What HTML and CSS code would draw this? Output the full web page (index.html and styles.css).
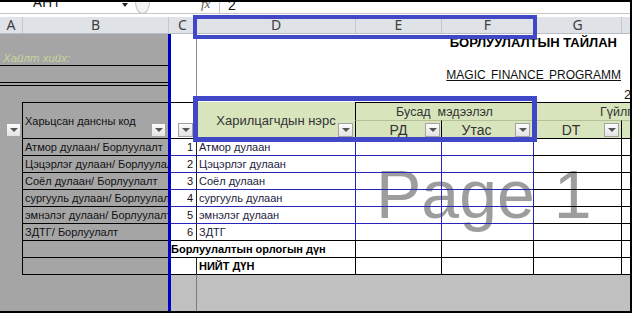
FILE: index.html
```html
<!DOCTYPE html>
<html lang="mn">

<head>
    <meta charset="UTF-8">
    <meta name="viewport" content="width=device-width, initial-scale=1.0">
    <title>Борлуулалтын тайлан</title>
    <link rel="stylesheet" href="styles.css">
</head>

<body>
    <div class="window">
        <div class="formula-bar">
            <div class="name-box"><span class="value">AH1</span><span class="arrow"></span></div>
            <div class="splitter"><span class="knob"></span></div>
            <div class="fx">fx</div>
            <div class="formula"><span>2</span></div>
        </div>

        <div class="col-heads">
            <div>A</div>
            <div>B</div>
            <div>C</div>
            <div>D</div>
            <div>E</div>
            <div>F</div>
            <div>G</div>
            <div></div>
        </div>

        <div class="watermark">Page 1</div>

        <div class="sheet">
            <div class="row r-title">
                <div class="out span-ab"></div>
                <div></div>
                <div class="grid-d"></div>
                <div class="span-eg title">БОРЛУУЛАЛТЫН ТАЙЛАН</div>
                <div></div>
            </div>
            <div class="row r-search">
                <div class="out span-ab rule search">Хайлт хийх:</div>
                <div></div>
                <div class="grid-d"></div>
                <div class="span-eg"></div>
                <div></div>
            </div>
            <div class="row r-prog">
                <div class="out span-ab rule"></div>
                <div></div>
                <div class="grid-d"></div>
                <div class="span-eg program">MAGIC FINANCE PROGRAMM</div>
                <div></div>
            </div>
            <div class="row r-thin">
                <div class="out span-ab rule"></div>
                <div></div>
                <div class="grid-d"></div>
                <div class="span-eg"></div>
                <div></div>
            </div>
            <div class="row r-date">
                <div class="out span-ab"></div>
                <div></div>
                <div class="grid-d"></div>
                <div class="span-eg"></div>
                <div class="date">2014</div>
            </div>

            <div class="row head">
                <div class="out h-a"><span class="filter"></span></div>
                <div class="out h-b">Харьцсан дансны код<span class="filter"></span></div>
                <div class="h-c"><span class="filter"></span></div>
                <div class="h-d">Харилцагчдын нэрс<span class="filter"></span></div>
                <div class="h-group h-ef">Бусад&nbsp; мэдээлэл</div>
                <div class="h-group h-gh">Гүйлгээний мэдээлэл</div>
                <div class="h-sub h-e">РД<span class="filter"></span></div>
                <div class="h-sub h-f">Утас<span class="filter"></span></div>
                <div class="h-sub h-g">DT<span class="filter"></span></div>
                <div class="h-sub h-h"></div>
            </div>

            <div class="row data first">
                <div class="out"></div>
                <div class="out acct">Атмор дулаан/ Борлуулалт</div>
                <div class="num">1</div>
                <div class="name">Атмор дулаан</div>
                <div class="blank"></div>
                <div class="blank"></div>
                <div class="blank dt"></div>
                <div class="blank tail"></div>
            </div>
            <div class="row data">
                <div class="out"></div>
                <div class="out acct">Цэцэрлэг дулаан/ Борлуулалт</div>
                <div class="num">2</div>
                <div class="name">Цэцэрлэг дулаан</div>
                <div class="blank"></div>
                <div class="blank"></div>
                <div class="blank dt"></div>
                <div class="blank tail"></div>
            </div>
            <div class="row data">
                <div class="out"></div>
                <div class="out acct">Соёл дулаан/ Борлуулалт</div>
                <div class="num">3</div>
                <div class="name">Соёл дулаан</div>
                <div class="blank"></div>
                <div class="blank"></div>
                <div class="blank dt"></div>
                <div class="blank tail"></div>
            </div>
            <div class="row data">
                <div class="out"></div>
                <div class="out acct">сургууль дулаан/ Борлуулалт</div>
                <div class="num">4</div>
                <div class="name">сургууль дулаан</div>
                <div class="blank"></div>
                <div class="blank"></div>
                <div class="blank dt"></div>
                <div class="blank tail"></div>
            </div>
            <div class="row data">
                <div class="out"></div>
                <div class="out acct">эмнэлэг дулаан/ Борлуулалт</div>
                <div class="num">5</div>
                <div class="name">эмнэлэг дулаан</div>
                <div class="blank"></div>
                <div class="blank"></div>
                <div class="blank dt"></div>
                <div class="blank tail"></div>
            </div>
            <div class="row data">
                <div class="out"></div>
                <div class="out acct">ЗДТГ/ Борлуулалт</div>
                <div class="num">6</div>
                <div class="name">ЗДТГ</div>
                <div class="blank"></div>
                <div class="blank"></div>
                <div class="blank dt"></div>
                <div class="blank tail"></div>
            </div>

            <div class="row total">
                <div class="out"></div>
                <div class="out acct"></div>
                <div class="sum">Борлуулалтын орлогын дүн</div>
                <div class="cell"></div>
                <div class="cell"></div>
                <div class="cell"></div>
                <div class="cell"></div>
            </div>
            <div class="row total">
                <div class="out"></div>
                <div class="out acct"></div>
                <div class="cell-c"></div>
                <div class="name">НИЙТ ДҮН</div>
                <div class="cell"></div>
                <div class="cell"></div>
                <div class="cell"></div>
                <div class="cell"></div>
            </div>

            <div class="row rest">
                <div class="out"></div>
                <div class="out acct-end"></div>
                <div class="void"></div>
                <div class="void void-d"></div>
                <div class="void void-tail"></div>
            </div>
        </div>

        <div class="page-break"></div>
        <div class="select-box head-box"></div>
        <div class="select-box field-box"></div>
    </div>
</body>

</html>
```

FILE: styles.css
```css
* {
    margin: 0;
    padding: 0;
    box-sizing: border-box;
}

body {
    font-family: "Liberation Sans", Arial, sans-serif;
    background: #fff;
    color: #111;
}

.window {
    --cols: 22px 146px 28px 159px 86px 92px 88px 1fr;
    position: relative;
    display: flex;
    flex-direction: column;
    width: 632px;
    height: 313px;
    border-top: 2px solid #000;
    border-right: 2px solid #000;
    border-bottom: 2px solid #000;
    overflow: hidden;
}

/* formula bar */
.formula-bar {
    display: flex;
    height: 12px;
    border-bottom: 1px solid #c6c6c6;
    overflow: hidden;
}

.name-box {
    display: flex;
    width: 135px;
    padding-left: 33px;
    font-family: "Noto Sans", sans-serif;
    font-size: 14px;
    line-height: 14px;
}

.name-box .value {
    margin-top: -7px;
}

.name-box .arrow {
    margin: 1px 7px 0 auto;
    width: 0;
    height: 0;
    border-left: 3px solid transparent;
    border-right: 3px solid transparent;
    border-top: 4px solid #222;
}

.splitter {
    width: 66px;
}

.knob {
    display: block;
    width: 15px;
    height: 24px;
    margin-top: -12px;
    border: 1px solid #c4c4c4;
    border-radius: 50%;
    background: #f3f3f3;
}

.fx {
    width: 18px;
    margin-top: -5px;
    font-family: "Liberation Serif", serif;
    font-style: italic;
    font-size: 13px;
    line-height: 13px;
    color: #555;
}

.formula {
    flex: 1;
    border-left: 1px solid #c6c6c6;
    padding-left: 8px;
    font-size: 14px;
    line-height: 14px;
}

.formula span {
    display: block;
    margin-top: -4px;
}

/* column letters */
.col-heads {
    display: grid;
    grid-template-columns: var(--cols);
    height: 17px;
    margin-top: 3px;
    background: #dfe3e8;
    border-bottom: 1px solid #b9bec5;
    font-family: "Noto Sans", sans-serif;
    font-size: 14px;
    color: #404040;
}

.col-heads div {
    display: flex;
    align-items: center;
    justify-content: center;
    border-left: 1px solid #c4c8ce;
    line-height: 1;
}

.col-heads div:first-child {
    border-left: 0;
}

/* sheet */
.sheet {
    flex: 1;
    display: flex;
    flex-direction: column;
    font-size: 11px;
}

.row {
    display: grid;
    grid-template-columns: var(--cols);
}

.row > div {
    position: relative;
    display: flex;
    align-items: center;
    min-width: 0;
    overflow: hidden;
    white-space: nowrap;
}

.out {
    background: #a5a5a5;
}

.span-ab {
    grid-column: span 2;
}

.span-eg {
    grid-column: span 3;
    justify-content: flex-end;
}

.rule {
    border-bottom: 1px solid #000;
}

.grid-d {
    border-left: 1px solid #8a8a8a;
}

.r-title { height: 17px; }
.r-search { height: 15px; }
.r-prog { height: 17px; }
.r-thin { height: 3px; }
.r-date { height: 16px; }

.title {
    padding-right: 4px;
    font-size: 13px;
    font-weight: bold;
    color: #000;
}

.search {
    padding-left: 3px;
    font-size: 11.5px;
    font-style: italic;
    color: #c4d79b;
}

.program {
    font-size: 12px;
    word-spacing: 2px;
    text-decoration: underline;
    color: #111;
}

.date {
    padding-left: 3px;
    font-size: 13px;
}

/* table header */
.head {
    height: 36px;
    grid-template-rows: 18px 18px;
}

.head .h-a {
    grid-column: 1;
    grid-row: 1 / 3;
}

.head .h-b {
    grid-column: 2;
    grid-row: 1 / 3;
    border-top: 1px solid #000;
    border-left: 1px solid #000;
    padding-left: 2px;
}

.head .h-c {
    grid-column: 3;
    grid-row: 1 / 3;
    border-top: 1px solid #000;
}

.head .h-d {
    grid-column: 4;
    grid-row: 1 / 3;
    justify-content: center;
    background: #d8e4bc;
    border-left: 1px solid #222;
    font-size: 13px;
    color: #333;
}

.head .h-group {
    justify-content: center;
    background: #d8e4bc;
    border-top: 1px solid #000;
    border-left: 1px solid #000;
    font-size: 12.5px;
    color: #333;
}

.head .h-ef {
    grid-column: 5 / 7;
    grid-row: 1;
}

.head .h-gh {
    grid-column: 7 / 9;
    grid-row: 1;
    justify-content: flex-start;
    padding-left: 66px;
}

.head .h-sub {
    justify-content: center;
    background: #d8e4bc;
    border-top: 1px solid #b4c095;
    border-left: 1px solid #000;
    font-size: 14px;
    color: #333;
}

.head .h-e { grid-column: 5; grid-row: 2; }
.head .h-f { grid-column: 6; grid-row: 2; padding-right: 22px; }
.head .h-g { grid-column: 7; grid-row: 2; padding-right: 13px; }
.head .h-h { grid-column: 8; grid-row: 2; }

.filter {
    position: absolute;
    right: 2px;
    bottom: 1px;
    width: 15px;
    height: 14px;
    border: 1px solid #a3a3a3;
    background: linear-gradient(#fcfcfc, #e3e3e3);
}

.filter::after {
    content: "";
    position: absolute;
    left: 3px;
    top: 4px;
    border-left: 4px solid transparent;
    border-right: 4px solid transparent;
    border-top: 4px solid #555;
}

.h-a .filter,
.h-e .filter {
    right: 1px;
}

.h-c .filter,
.h-f .filter {
    right: 3px;
}

/* body rows */
.data,
.total {
    height: 17px;
}

.acct {
    padding-left: 2px;
    border-top: 1px solid #000;
    border-left: 1px solid #000;
    color: #111;
}

.num {
    justify-content: flex-end;
    padding-right: 3px;
    color: #111;
}

.name {
    padding-left: 2px;
    border-left: 1px solid #222;
    color: #1c2340;
}

.data .num,
.data .name,
.data .blank {
    border-top: 1px solid #2626b8;
}

.data .blank {
    border-left: 1px solid #2626b8;
}

.data .dt,
.data .tail,
.data.first .num,
.data.first .name,
.data.first .blank {
    border-top-color: #000;
}

.data .tail {
    border-left-color: #000;
}

.total .sum {
    grid-column: span 2;
    padding-left: 3px;
    border-top: 1px solid #000;
    font-weight: bold;
    color: #000;
}

.total .cell {
    border-top: 1px solid #000;
    border-left: 1px solid #000;
}

.total .cell-c {
    border-top: 1px solid #000;
}

.total .name {
    border-top: 1px solid #000;
    font-weight: bold;
    color: #000;
}

.rest {
    flex: 1;
}

.rest .acct-end {
    border-top: 1px solid #000;
}

.rest .void {
    background: #c0c0c0;
    border-top: 1px solid #000;
}

.rest .void-d {
    border-left: 1px solid #7a7a7a;
}

.rest .void-tail {
    grid-column: span 4;
}

/* overlays */
.watermark {
    position: absolute;
    left: 376px;
    top: 158px;
    font-size: 68px;
    line-height: 68px;
    color: #9d9d9d;
    white-space: nowrap;
}

.page-break {
    position: absolute;
    left: 168px;
    top: 32px;
    bottom: 0;
    width: 3px;
    background: #0000c8;
}

.select-box {
    position: absolute;
    left: 193px;
    width: 344px;
    border: 4px solid #4048c8;
}

.head-box {
    top: 13px;
    height: 24px;
}

.field-box {
    top: 94px;
    height: 46px;
    border-width: 5px;
}
```
